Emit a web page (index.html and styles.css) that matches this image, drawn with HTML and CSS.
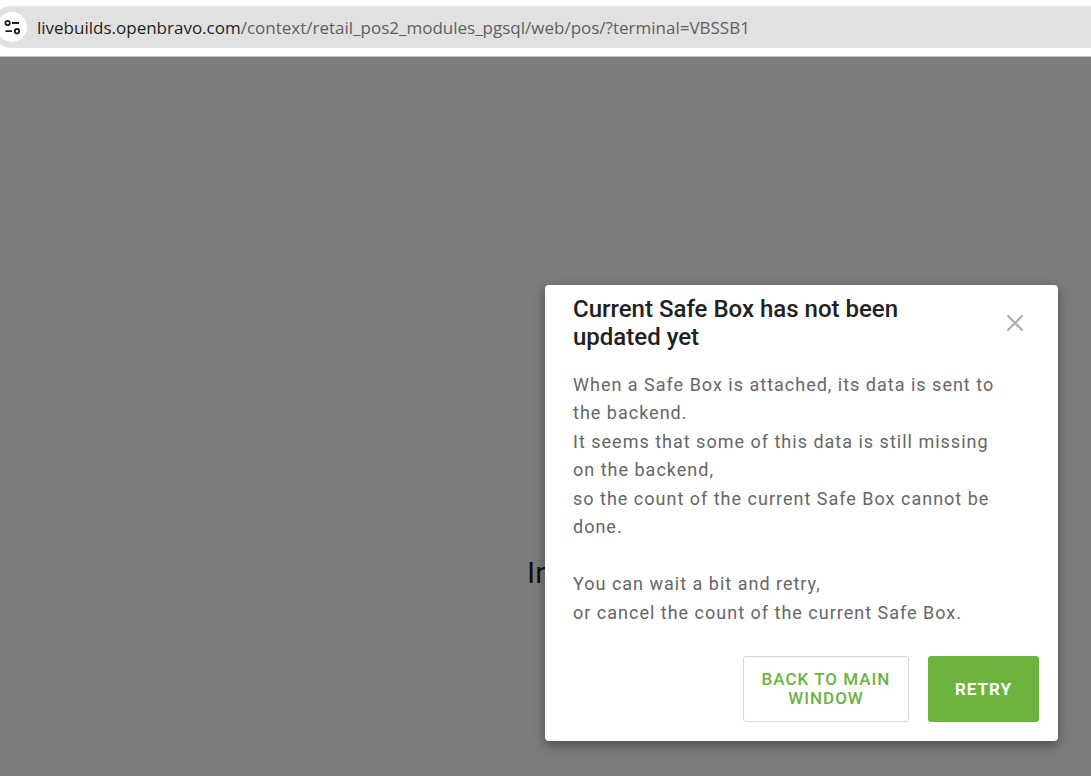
FILE: index.html
```html
<!DOCTYPE html>
<html lang="en">
<head>
    <meta charset="UTF-8">
    <meta name="viewport" content="width=device-width, initial-scale=1.0">
    <title>Openbravo POS</title>
    <link rel="stylesheet" href="styles.css">
</head>
<body>

    <!-- Address bar -->
    <header class="browser-bar">
        <div class="address">
            <button class="site-info" aria-label="View site information">
                <svg width="18" height="18" viewBox="0 0 18 18" fill="none" stroke="#1f1f1f" stroke-width="1.8">
                    <circle cx="4.600" cy="5" r="2.200"/>
                    <path d="M9 5h7M2.500 13.200h6.500"/>
                    <circle cx="14" cy="13.200" r="2.200"/>
                </svg>
            </button>
            <a class="url" href="#"><span class="host">livebuilds.openbravo.com</span>/context/retail_pos2_modules_pgsql/web/pos/?terminal=VBSSB1</a>
        </div>
    </header>

    <main class="page">
        <p class="loading">In</p>

        <!-- Modal -->
        <div class="overlay">
            <section class="dialog" role="dialog" aria-modal="true" aria-labelledby="dialog-title">
                <div class="dialog-header">
                    <h1 id="dialog-title">Current Safe Box has not been updated yet</h1>
                    <button class="close-btn" aria-label="Close">
                        <svg width="18" height="18" viewBox="0 0 18 18" fill="none" stroke="#adadad" stroke-width="2.2">
                            <path d="M1.500 1.500l15 15M16.500 1.500l-15 15"/>
                        </svg>
                    </button>
                </div>
                <div class="dialog-body">
                    <p>When a Safe Box is attached, its data is sent to the backend.</p>
                    <p>It seems that some of this data is still missing on the backend,</p>
                    <p>so the count of the current Safe Box cannot be done.</p>
                    <p class="new-block">You can wait a bit and retry,</p>
                    <p>or cancel the count of the current Safe Box.</p>
                </div>
                <div class="dialog-actions">
                    <button class="btn btn-outline">Back to main window</button>
                    <button class="btn btn-primary">Retry</button>
                </div>
            </section>
        </div>
    </main>

</body>
</html>
```

FILE: styles.css
```css
* {
    margin: 0;
    padding: 0;
    box-sizing: border-box;
}

body {
    font-family: Roboto, sans-serif;
    min-height: 100vh;
    display: flex;
    flex-direction: column;
    overflow: hidden;
    background: #fff;
}

/* Address bar */
.browser-bar {
    padding: 6px 0 8px;
    border-bottom: 1px solid #c4c6c4;
}

.address {
    height: 42px;
    margin-left: -9px;
    padding-left: 6px;
    display: flex;
    align-items: center;
    border-radius: 21px 0 0 21px;
    background: #e1e1e1;
}

.site-info {
    width: 30px;
    height: 30px;
    display: flex;
    align-items: center;
    justify-content: center;
    border: none;
    border-radius: 50%;
    background: #fff;
}

.url {
    margin-left: 10px;
    font-family: "Open Sans", "Noto Sans", sans-serif;
    font-size: 17px;
    color: #5f5f5f;
    text-decoration: none;
    white-space: nowrap;
}

.host {
    color: #1f1f1f;
}

/* App page behind the modal */
.page {
    flex: 1;
    position: relative;
    background: #f9f9f9;
}

.loading {
    padding: 498px 0 0 527px;
    font-size: 30px;
    color: #222;
}

.overlay {
    position: absolute;
    inset: 0;
    display: flex;
    align-items: flex-end;
    justify-content: flex-end;
    padding: 0 33px 35px 0;
    background: rgba(0, 0, 0, 0.5);
}

.dialog {
    width: 513px;
    max-width: 100%;
    padding: 10px 19px 19px 28px;
    border-radius: 4px;
    background: #fff;
    box-shadow: 0 4px 12px rgba(0, 0, 0, 0.4);
}

.dialog-header {
    display: flex;
    align-items: center;
    justify-content: space-between;
    padding-right: 14px;
}

.dialog-header h1 {
    max-width: 370px;
    font-size: 24px;
    font-weight: 500;
    line-height: 28px;
    color: #212121;
}

.close-btn {
    display: flex;
    padding: 1px;
    border: none;
    background: none;
    cursor: pointer;
}

.dialog-body {
    display: flex;
    flex-direction: column;
    gap: 1px;
    padding: 20px 36px 29px 0;
    font-size: 18px;
    line-height: 28px;
    letter-spacing: 1px;
    color: #666;
}

.new-block {
    margin-top: 28px;
}

.dialog-actions {
    display: flex;
    justify-content: flex-end;
    gap: 19px;
}

.btn {
    min-height: 66px;
    border-radius: 3px;
    font-family: inherit;
    font-size: 17px;
    font-weight: 500;
    line-height: 19px;
    letter-spacing: 1px;
    text-transform: uppercase;
    cursor: pointer;
}

.btn-outline {
    width: 166px;
    padding: 0 14px;
    border: 1px solid #d5d5d5;
    background: #fff;
    color: #6cb33f;
}

.btn-primary {
    width: 111px;
    border: none;
    background: #6cb33f;
    color: #fff;
    font-weight: 700;
}
```
